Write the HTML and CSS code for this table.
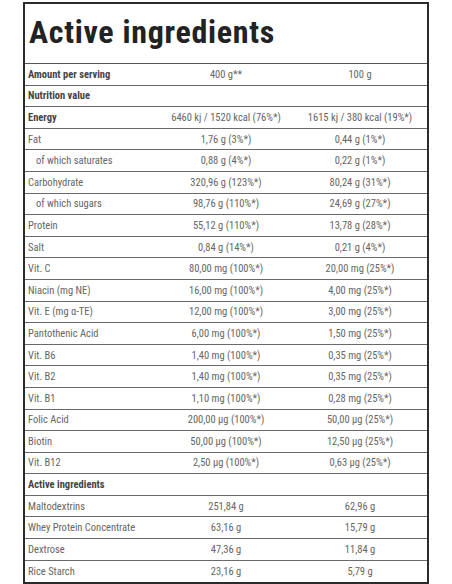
FILE: index.html
```html
<!DOCTYPE html>
<html lang="en">
<head>
<meta charset="utf-8">
<title>Active ingredients</title>
<link rel="stylesheet" href="styles.css">
</head>
<body>
<div class="card">
  <h1 class="title">Active ingredients</h1>
  <div class="table">
    <div class="row head"><div class="label">Amount per serving</div><div class="val">400 g**</div><div class="val">100 g</div></div>
    <div class="row head"><div class="label">Nutrition value</div><div class="val"></div><div class="val"></div></div>
    <div class="row head"><div class="label">Energy</div><div class="val">6460 kj / 1520 kcal (76%*)</div><div class="val">1615 kj / 380 kcal (19%*)</div></div>
    <div class="row"><div class="label">Fat</div><div class="val">1,76 g (3%*)</div><div class="val">0,44 g (1%*)</div></div>
    <div class="row"><div class="label sub">of which saturates</div><div class="val">0,88 g (4%*)</div><div class="val">0,22 g (1%*)</div></div>
    <div class="row"><div class="label">Carbohydrate</div><div class="val">320,96 g (123%*)</div><div class="val">80,24 g (31%*)</div></div>
    <div class="row"><div class="label sub">of which sugars</div><div class="val">98,76 g (110%*)</div><div class="val">24,69 g (27%*)</div></div>
    <div class="row"><div class="label">Protein</div><div class="val">55,12 g (110%*)</div><div class="val">13,78 g (28%*)</div></div>
    <div class="row"><div class="label">Salt</div><div class="val">0,84 g (14%*)</div><div class="val">0,21 g (4%*)</div></div>
    <div class="row"><div class="label">Vit. C</div><div class="val">80,00 mg (100%*)</div><div class="val">20,00 mg (25%*)</div></div>
    <div class="row"><div class="label">Niacin (mg NE)</div><div class="val">16,00 mg (100%*)</div><div class="val">4,00 mg (25%*)</div></div>
    <div class="row"><div class="label">Vit. E (mg α-TE)</div><div class="val">12,00 mg (100%*)</div><div class="val">3,00 mg (25%*)</div></div>
    <div class="row"><div class="label">Pantothenic Acid</div><div class="val">6,00 mg (100%*)</div><div class="val">1,50 mg (25%*)</div></div>
    <div class="row"><div class="label">Vit. B6</div><div class="val">1,40 mg (100%*)</div><div class="val">0,35 mg (25%*)</div></div>
    <div class="row"><div class="label">Vit. B2</div><div class="val">1,40 mg (100%*)</div><div class="val">0,35 mg (25%*)</div></div>
    <div class="row"><div class="label">Vit. B1</div><div class="val">1,10 mg (100%*)</div><div class="val">0,28 mg (25%*)</div></div>
    <div class="row"><div class="label">Folic Acid</div><div class="val">200,00 µg (100%*)</div><div class="val">50,00 µg (25%*)</div></div>
    <div class="row"><div class="label">Biotin</div><div class="val">50,00 µg (100%*)</div><div class="val">12,50 µg (25%*)</div></div>
    <div class="row"><div class="label">Vit. B12</div><div class="val">2,50 µg (100%*)</div><div class="val">0,63 µg (25%*)</div></div>
    <div class="row head"><div class="label">Active ingredients</div><div class="val"></div><div class="val"></div></div>
    <div class="row"><div class="label">Maltodextrins</div><div class="val">251,84 g</div><div class="val">62,96 g</div></div>
    <div class="row"><div class="label">Whey Protein Concentrate</div><div class="val">63,16 g</div><div class="val">15,79 g</div></div>
    <div class="row"><div class="label">Dextrose</div><div class="val">47,36 g</div><div class="val">11,84 g</div></div>
    <div class="row"><div class="label">Rice Starch</div><div class="val">23,16 g</div><div class="val">5,79 g</div></div>
  </div>
</div>
</body>
</html>
```
FILE: styles.css
```css
html, body {
  margin: 0;
  padding: 0;
  background: #ffffff;
}
body {
  font-family: "Roboto Condensed", Roboto, "Liberation Sans Narrow", "DejaVu Sans Condensed", sans-serif;
  font-stretch: condensed;
}
.card {
  width: 406px;
  box-sizing: border-box;
  margin: 2px auto 0;
  border: 2px solid #2b2b2b;
}
.title {
  margin: 0;
  height: 60px;
  box-sizing: border-box;
  padding: 10px 0 0 4px;
  font-size: 32px;
  line-height: 36px;
  font-weight: 700;
  letter-spacing: 0.7px;
  color: #222222;
  border-bottom: 1px solid #555555;
}
.row {
  display: grid;
  grid-template-columns: 1fr 1fr 1fr;
  height: 21.6px;
  box-sizing: border-box;
  border-bottom: 1px solid #6a6a6a;
  align-items: center;
  font-size: 10.5px;
  color: #666666;
}
.row:last-child {
  border-bottom: none;
}
.label {
  padding-left: 3px;
  white-space: nowrap;
}
.label.sub {
  padding-left: 11px;
}
.val {
  text-align: center;
  white-space: nowrap;
}
.head .label {
  font-weight: 700;
  color: #444444;
}
```
